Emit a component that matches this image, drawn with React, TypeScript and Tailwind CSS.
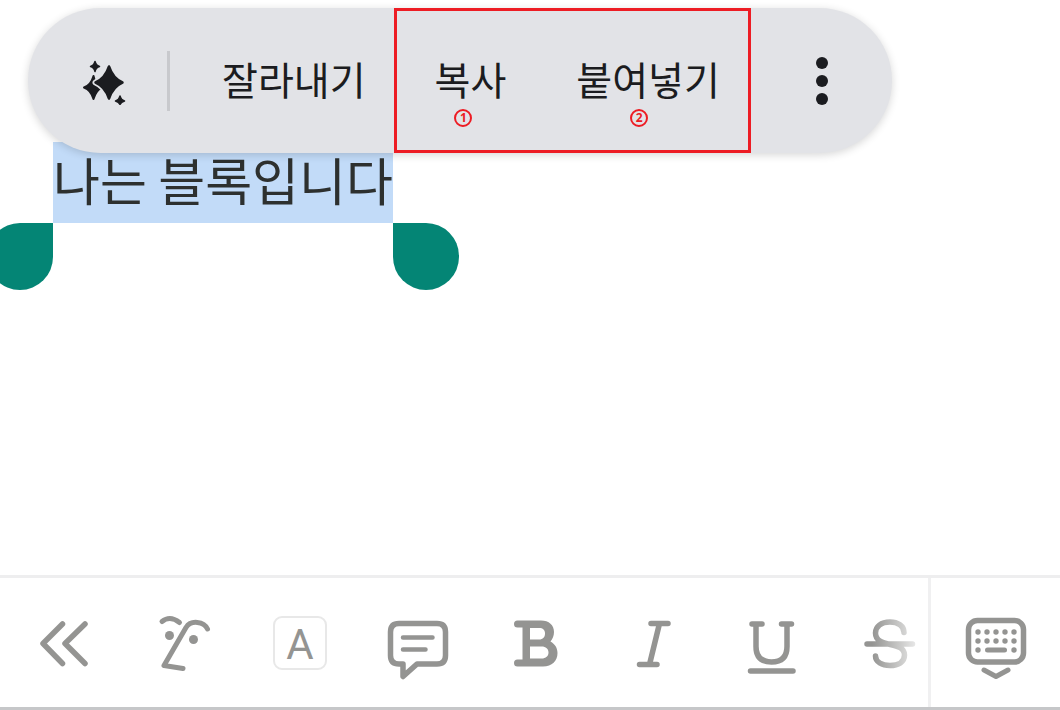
import React from 'react';

interface ToolButtonProps {
  label: string;
  children: React.ReactNode;
}

interface StepBadgeProps {
  step: number;
}

// Todos os ícones da barra usam a mesma grade de 80x80
const ToolIcon: React.FC<{ children: React.ReactNode }> = ({ children }) => (
  <svg
    viewBox="0 0 80 80"
    className="h-20 w-20"
    fill="none"
    stroke="currentColor"
    strokeWidth="5.5"
    strokeLinecap="round"
    strokeLinejoin="round"
    aria-hidden="true"
  >
    {children}
  </svg>
);

const ToolButton: React.FC<ToolButtonProps> = ({ label, children }) => (
  <button
    type="button"
    aria-label={label}
    className="flex w-[118px] shrink-0 items-center justify-center text-[#949492]"
  >
    {children}
  </button>
);

const StepBadge: React.FC<StepBadgeProps> = ({ step }) => (
  <span className="absolute top-[101px] left-1/2 -ml-3.5 flex h-[18px] w-[18px] items-center justify-center rounded-full border-2 border-[#ed1c24] font-['Open_Sans',sans-serif] text-xs leading-none font-bold text-[#ed1c24]">
    {step}
  </span>
);

const SparkleIcon = () => (
  <svg
    viewBox="0 0 48 48"
    className="h-12 w-12"
    fill="currentColor"
    stroke="currentColor"
    strokeLinejoin="round"
    aria-hidden="true"
  >
    <path d="M14.500 19Q16 28 23 30.500Q17 33 14.500 42Q12 33 5 30.500Q12 28 14.500 19Z" strokeWidth="2" />
    <path d="M30 9.500Q34 21.500 43.500 25.500Q34 29.500 30 41.500Q26 29.500 16.500 25.500Q26 21.500 30 9.500Z" stroke="#e2e3e7" strokeWidth="6" />
    <path d="M30 9.500Q34 21.500 43.500 25.500Q34 29.500 30 41.500Q26 29.500 16.500 25.500Q26 21.500 30 9.500Z" strokeWidth="2.500" />
    <path d="M16 4.500Q17 8.500 20.500 9.500Q17 10.500 16 14.500Q15 10.500 11.500 9.500Q15 8.500 16 4.500Z" strokeWidth="1.500" />
    <path d="M41 39Q42 43 45.500 44Q42 45 41 47.500Q40 45 36.500 44Q40 43 41 39Z" strokeWidth="1.500" />
  </svg>
);

// Menu flutuante exibido sobre o texto selecionado
const SelectionMenu = () => (
  <div
    role="toolbar"
    aria-label="텍스트 선택 메뉴"
    className="absolute top-2 left-7 z-10 flex h-[145px] items-center rounded-full bg-[#e2e3e7] text-[39px] leading-none text-[#1b1c20] shadow-[0_2px_8px_rgba(0,0,0,0.16)]"
  >
    <button type="button" aria-label="AI" className="flex h-full items-center pr-10 pl-[51px]">
      <SparkleIcon />
    </button>
    <span className="h-15 w-[3px] bg-[#c8c9cd]" />
    <button type="button" className="h-full pr-7 pb-1 pl-[52px]">
      잘라내기
    </button>
    <div className="flex h-full border-3 border-[#ed1c24]">
      <button type="button" className="relative -my-[3px] pr-[34px] pb-1 pl-[38px]">
        복사
        <StepBadge step={1} />
      </button>
      <button type="button" className="relative -my-[3px] pr-7 pb-1 pl-9">
        붙여넣기
        <StepBadge step={2} />
      </button>
    </div>
    <button type="button" aria-label="더보기" className="flex h-full items-center pr-[58px] pl-[59px]">
      <svg viewBox="0 0 24 48" className="h-12 w-6" fill="currentColor" aria-hidden="true">
        <circle cx="12" cy="6" r="6" />
        <circle cx="12" cy="24" r="6" />
        <circle cx="12" cy="42" r="6" />
      </svg>
    </button>
  </div>
);

const SelectedText = () => (
  <div className="-ml-[13px] w-fit pt-[142px]">
    <p className="px-[66px] text-[51px] leading-[75px] whitespace-nowrap">
      <mark className="block bg-[#c2dbf8] pb-[6px] text-[#2d302f]">나는 블록입니다</mark>
    </p>
    {/* Alças de seleção */}
    <div className="flex justify-between">
      <span className="h-[67px] w-[66px] rounded-full rounded-tr-none bg-[#048575]" />
      <span className="h-[67px] w-[66px] rounded-full rounded-tl-none bg-[#048575]" />
    </div>
  </div>
);

const FormatBar = () => (
  <footer className="flex h-[135px] border-t-3 border-b-3 border-t-[#eeeeef] border-b-[#c6c7c9]">
    <div className="relative flex min-w-0 flex-1 overflow-hidden pl-[5px]">
      <ToolButton label="접기">
        <ToolIcon>
          <path d="M38.500 21L19 40.500L38.500 60.500M61 21L41 40.500L61 60.500" />
        </ToolIcon>
      </ToolButton>
      <ToolButton label="스티커">
        <ToolIcon>
          <path d="M20 18.500Q28 12 37.500 19.500" strokeWidth="5" />
          <path d="M65.500 26C62 18.500 49 16.500 44 24.500L22 62.500L41 65.500" strokeWidth="5" />
          <circle cx="27.500" cy="32.500" r="4.500" fill="currentColor" stroke="none" />
          <circle cx="51.500" cy="36.500" r="4.500" fill="currentColor" stroke="none" />
        </ToolIcon>
      </ToolButton>
      <ToolButton label="글자색">
        <span className="flex h-[54px] w-[54px] items-center justify-center rounded-[9px] border-2 border-[#e8e8e8] pt-1 font-[Roboto,sans-serif] text-[42px] leading-none">
          A
        </span>
      </ToolButton>
      <ToolButton label="댓글">
        <ToolIcon>
          <path
            d="M21 20.500H59Q67.500 20.500 67.500 29V52.500Q67.500 61 59 61H39L25 73.500V61H21Q12.500 61 12.500 52.500V29Q12.500 20.500 21 20.500Z"
            strokeWidth="5.500"
          />
          <path d="M25 34.500H54.500M25 46.500H47.500" strokeWidth="4.500" />
        </ToolIcon>
      </ToolButton>
      <ToolButton label="굵게">
        <ToolIcon>
          <path
            d="M21.500 17.500H45C53 17.500 58 22 58 29C58 33 56.500 36 54.500 38.500C59 41 61.500 45 61.500 50C61.500 58 56 63.500 47 63.500H21.500A3.500 3.500 0 0 1 21.500 56.500H26.500V24.500H21.500A3.500 3.500 0 0 1 21.500 17.500ZM34 25V36.500H43C47 36.500 49 34 49 30.500C49 27 47 25 43 25ZM34 43.500V55.500H45.500C50 55.500 52.500 53 52.500 49.500C52.500 46 50 43.500 45.500 43.500Z"
            fill="currentColor"
            fillRule="evenodd"
            stroke="none"
          />
        </ToolIcon>
      </ToolButton>
      <ToolButton label="기울임">
        <ToolIcon>
          <path d="M37 20.500H54M25.500 61.500H43M45.500 20.500L35.500 61.500" />
        </ToolIcon>
      </ToolButton>
      <ToolButton label="밑줄">
        <ToolIcon>
          <path d="M20 21H30M49.500 21H59.500M24 21V43.500Q24 59 39.500 59Q55 59 55 43.500V21M18.500 68H61" />
        </ToolIcon>
      </ToolButton>
      <ToolButton label="취소선">
        <ToolIcon>
          <path d="M54 29.500C54 23 48 19 40 19C31 19 25.500 23.500 25.500 30C25.500 46 54.500 37 54.500 52C54.500 59 48.500 62.500 40 62.500C32 62.500 25.500 59 25.500 53M17 41H62.500" />
        </ToolIcon>
      </ToolButton>
      <div className="pointer-events-none absolute inset-y-0 right-0 w-14 bg-linear-to-r from-white/0 to-white" />
    </div>
    <button
      type="button"
      aria-label="키보드 숨기기"
      className="flex w-[132px] shrink-0 items-center justify-center border-l-3 border-[#f0f0f1] text-[#949492]"
    >
      <ToolIcon>
        <rect x="12.500" y="17.500" width="55" height="41.500" rx="9" />
        {[29, 38, 47].map((y) =>
          [22, 31, 40, 49, 58]
            .filter((x) => y < 46 || x === 22 || x === 58)
            .map((x) => <circle key={`${x}-${y}`} cx={x} cy={y} r="2.700" fill="currentColor" stroke="none" />)
        )}
        <path d="M31.500 47H48.500" strokeWidth="5" />
        <path d="M28 67L40 73.500L52 67" strokeWidth="5" />
      </ToolIcon>
    </button>
  </footer>
);

export default function App() {
  return (
    <div className="flex min-h-screen flex-col overflow-hidden bg-white font-['Noto_Sans_CJK_KR',sans-serif]">
      <main className="relative flex-1">
        <SelectionMenu />
        <SelectedText />
      </main>
      <FormatBar />
    </div>
  );
}
